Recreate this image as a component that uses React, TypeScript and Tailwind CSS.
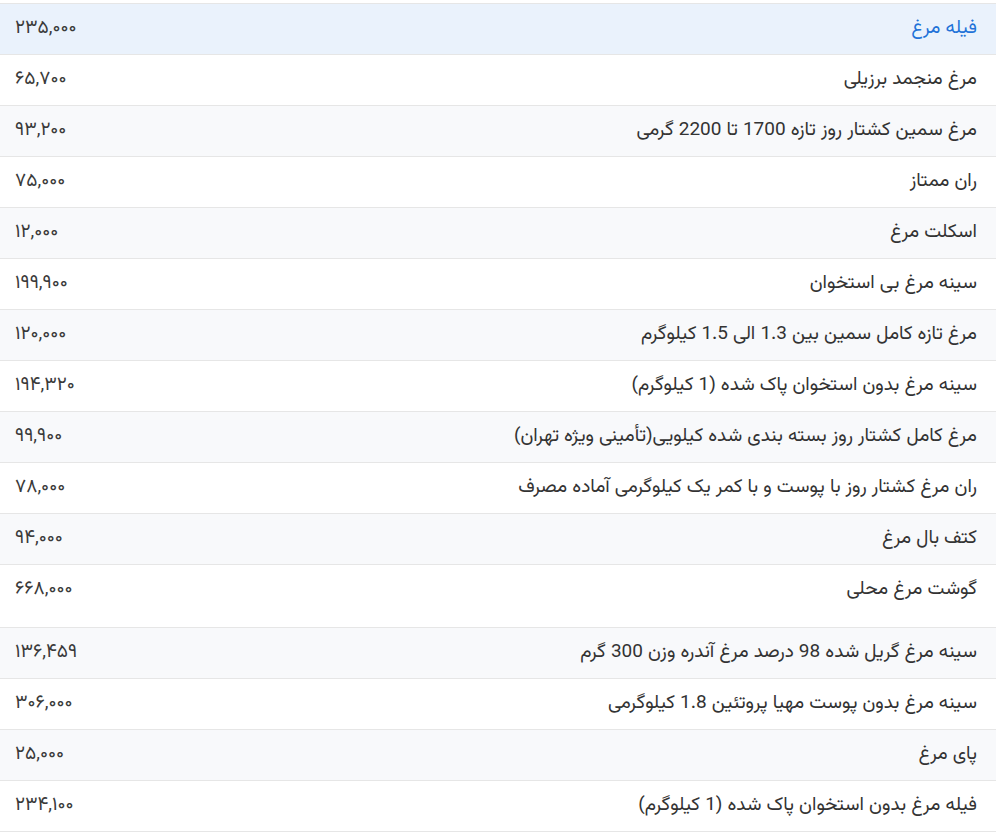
import React from "react";

const rows: { name: string; price: string; tall?: boolean }[] = [
  { name: "فیله مرغ", price: "۲۳۵,۰۰۰" },
  { name: "مرغ منجمد برزیلی", price: "۶۵,۷۰۰" },
  { name: "مرغ سمین کشتار روز تازه 1700 تا 2200 گرمی", price: "۹۳,۲۰۰" },
  { name: "ران ممتاز", price: "۷۵,۰۰۰" },
  { name: "اسکلت مرغ", price: "۱۲,۰۰۰" },
  { name: "سینه مرغ بی استخوان", price: "۱۹۹,۹۰۰" },
  { name: "مرغ تازه کامل سمین بین 1.3 الی 1.5 کیلوگرم", price: "۱۲۰,۰۰۰" },
  { name: "سینه مرغ بدون استخوان پاک شده (1 کیلوگرم)", price: "۱۹۴,۳۲۰" },
  { name: "مرغ کامل کشتار روز بسته بندی شده کیلویی(تأمینی ویژه تهران)", price: "۹۹,۹۰۰" },
  { name: "ران مرغ کشتار روز با پوست و با کمر یک کیلوگرمی آماده مصرف", price: "۷۸,۰۰۰" },
  { name: "کتف بال مرغ", price: "۹۴,۰۰۰" },
  { name: "گوشت مرغ محلی", price: "۶۶۸,۰۰۰", tall: true },
  { name: "سینه مرغ گریل شده 98 درصد مرغ آندره وزن 300 گرم", price: "۱۳۶,۴۵۹" },
  { name: "سینه مرغ بدون پوست مهیا پروتئین 1.8 کیلوگرمی", price: "۳۰۶,۰۰۰" },
  { name: "پای مرغ", price: "۲۵,۰۰۰" },
  { name: "فیله مرغ بدون استخوان پاک شده (1 کیلوگرم)", price: "۲۳۴,۱۰۰" },
];

export default function App() {
  return (
    <div
      dir="rtl"
      className="w-[996px] h-[833px] overflow-hidden bg-white pt-[3px]"
      style={{ fontFamily: 'Vazirmatn, "DejaVu Sans", sans-serif' }}
    >
      <div className="flex flex-col border-t border-[#e6e6e6]">
        {rows.map((r, i) => {
          const active = i === 0;
          const bg = active ? "bg-[#eaf2fc]" : i % 2 === 0 ? "bg-[#f8f9fb]" : "bg-white";
          return (
            <div
              key={i}
              className={`flex justify-between border-b border-[#e6e6e6] ${bg} ${
                r.tall ? "h-[63px] items-start pt-[10px]" : "h-[51px] items-center"
              } pr-[19px] pl-[15px]`}
            >
              <span
                className={`text-[19px] leading-[30px] ${active ? "text-[#2272d8]" : "text-[#333333]"}`}
              >
                {r.name}
              </span>
              <span className="text-[19px] leading-[30px] text-[#3a3a3a]">{r.price}</span>
            </div>
          );
        })}
      </div>
    </div>
  );
}
